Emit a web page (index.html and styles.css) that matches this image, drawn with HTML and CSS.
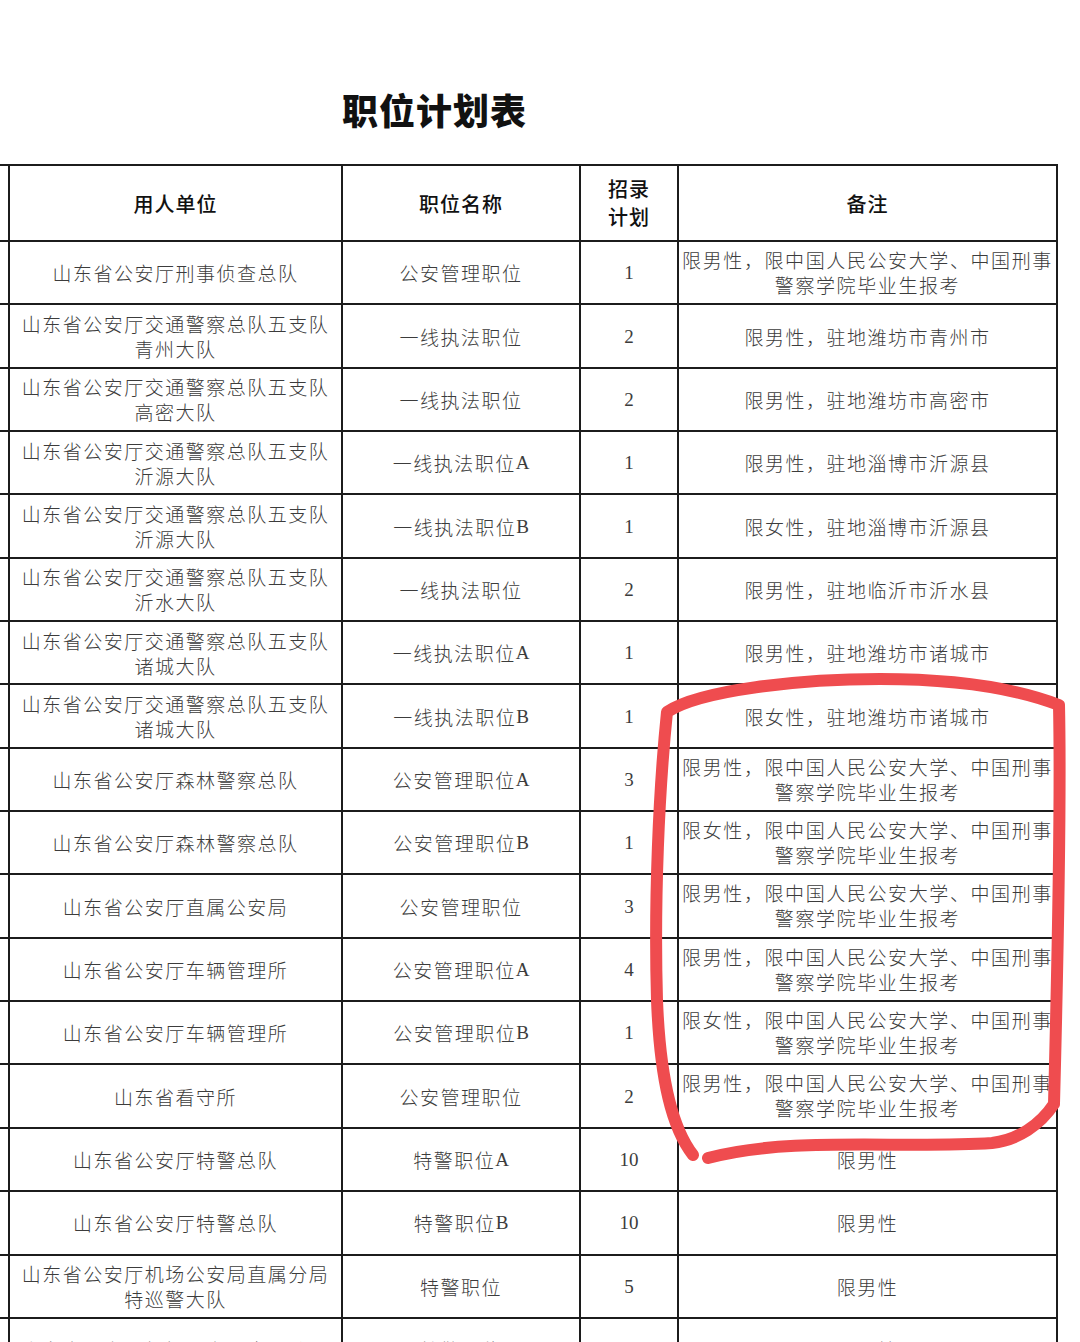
FILE: index.html
```html
<!DOCTYPE html>
<html lang="zh">
<head>
<meta charset="utf-8">
<title>职位计划表</title>
<link rel="stylesheet" href="styles.css">
</head>
<body>
<div class="page">
  <h1 class="title">职位计划表</h1>
  <div class="grid">
    <div class="c"></div><div class="c h">用人单位</div><div class="c h">职位名称</div><div class="c h h2">招录<br>计划</div><div class="c h">备注</div>

    <div class="c"></div><div class="c">山东省公安厅刑事侦查总队</div><div class="c">公安管理职位</div><div class="c n">1</div><div class="c r">限男性，限中国人民公安大学、中国刑事<br>警察学院毕业生报考</div>
    <div class="c"></div><div class="c">山东省公安厅交通警察总队五支队<br>青州大队</div><div class="c">一线执法职位</div><div class="c n">2</div><div class="c">限男性，驻地潍坊市青州市</div>
    <div class="c"></div><div class="c">山东省公安厅交通警察总队五支队<br>高密大队</div><div class="c">一线执法职位</div><div class="c n">2</div><div class="c">限男性，驻地潍坊市高密市</div>
    <div class="c"></div><div class="c">山东省公安厅交通警察总队五支队<br>沂源大队</div><div class="c">一线执法职位<span class="l">A</span></div><div class="c n">1</div><div class="c">限男性，驻地淄博市沂源县</div>
    <div class="c"></div><div class="c">山东省公安厅交通警察总队五支队<br>沂源大队</div><div class="c">一线执法职位<span class="l">B</span></div><div class="c n">1</div><div class="c">限女性，驻地淄博市沂源县</div>
    <div class="c"></div><div class="c">山东省公安厅交通警察总队五支队<br>沂水大队</div><div class="c">一线执法职位</div><div class="c n">2</div><div class="c">限男性，驻地临沂市沂水县</div>
    <div class="c"></div><div class="c">山东省公安厅交通警察总队五支队<br>诸城大队</div><div class="c">一线执法职位<span class="l">A</span></div><div class="c n">1</div><div class="c">限男性，驻地潍坊市诸城市</div>
    <div class="c"></div><div class="c">山东省公安厅交通警察总队五支队<br>诸城大队</div><div class="c">一线执法职位<span class="l">B</span></div><div class="c n">1</div><div class="c">限女性，驻地潍坊市诸城市</div>
    <div class="c"></div><div class="c">山东省公安厅森林警察总队</div><div class="c">公安管理职位<span class="l">A</span></div><div class="c n">3</div><div class="c r">限男性，限中国人民公安大学、中国刑事<br>警察学院毕业生报考</div>
    <div class="c"></div><div class="c">山东省公安厅森林警察总队</div><div class="c">公安管理职位<span class="l">B</span></div><div class="c n">1</div><div class="c r">限女性，限中国人民公安大学、中国刑事<br>警察学院毕业生报考</div>
    <div class="c"></div><div class="c">山东省公安厅直属公安局</div><div class="c">公安管理职位</div><div class="c n">3</div><div class="c r">限男性，限中国人民公安大学、中国刑事<br>警察学院毕业生报考</div>
    <div class="c"></div><div class="c">山东省公安厅车辆管理所</div><div class="c">公安管理职位<span class="l">A</span></div><div class="c n">4</div><div class="c r">限男性，限中国人民公安大学、中国刑事<br>警察学院毕业生报考</div>
    <div class="c"></div><div class="c">山东省公安厅车辆管理所</div><div class="c">公安管理职位<span class="l">B</span></div><div class="c n">1</div><div class="c r">限女性，限中国人民公安大学、中国刑事<br>警察学院毕业生报考</div>
    <div class="c"></div><div class="c">山东省看守所</div><div class="c">公安管理职位</div><div class="c n">2</div><div class="c r">限男性，限中国人民公安大学、中国刑事<br>警察学院毕业生报考</div>
    <div class="c"></div><div class="c">山东省公安厅特警总队</div><div class="c">特警职位<span class="l">A</span></div><div class="c n">10</div><div class="c">限男性</div>
    <div class="c"></div><div class="c">山东省公安厅特警总队</div><div class="c">特警职位<span class="l">B</span></div><div class="c n">10</div><div class="c">限男性</div>
    <div class="c"></div><div class="c">山东省公安厅机场公安局直属分局<br>特巡警大队</div><div class="c">特警职位</div><div class="c n">5</div><div class="c">限男性</div>
    <div class="c"></div><div class="c">山东省公安厅机场公安局直属分局</div><div class="c">特警职位</div><div class="c n">5</div><div class="c">限男性</div>
  </div>
  <svg class="mark" width="1080" height="1342" viewBox="0 0 1080 1342" aria-hidden="true">
    <path d="M693 1155 C672 1128 660 1080 657 1000 C654 900 659 790 667 712 C700 690 800 679 880 679 C960 679 1020 690 1059 705 C1061 800 1058 950 1054 1104 C1040 1125 1018 1140 992 1143 C900 1149 790 1136 708 1158" fill="none" stroke="#ef4c4f" stroke-width="12" stroke-linecap="round" stroke-linejoin="round"/>
  </svg>
</div>
</body>
</html>
```

FILE: styles.css
```css
html, body {
  margin: 0;
  padding: 0;
  background: #fff;
}
body {
  width: 1080px;
  height: 1342px;
  overflow: hidden;
  font-family: "Noto Sans CJK SC", "Noto Sans", sans-serif;
  color: #3c3c3c;
}
.page {
  position: relative;
  width: 1080px;
  height: 1342px;
  padding-top: 84px;
  box-sizing: border-box;
}
.title {
  margin: 0 0 0 342px;
  width: 186px;
  height: 80px;
  font-family: "Noto Sans CJK SC", serif;
  font-weight: 900;
  font-size: 36px;
  line-height: 50px;
  letter-spacing: 1px;
  color: #111;
}
.grid {
  margin-left: -2px;
  width: 1060px;
  box-sizing: border-box;
  display: grid;
  grid-template-columns: 8px 331px 236px 96px 377px;
  grid-template-rows: 74px;
  grid-auto-rows: 61.35px;
  gap: 2px;
  padding: 2px;
  background: #1c1c1c;
}
.c {
  background: #fff;
  display: flex;
  align-items: center;
  justify-content: center;
  text-align: center;
  font-size: 19px;
  font-weight: 300;
  line-height: 25px;
  letter-spacing: 1.5px;
  white-space: nowrap;
  overflow: visible;
}
.h {
  font-weight: 500;
  font-size: 20px;
  color: #111;
  letter-spacing: 1px;
}
.h2 {
  line-height: 28px;
}
.n {
  font-family: "Liberation Serif", serif;
  font-size: 19px;
  letter-spacing: 0;
}
.l {
  font-family: "Liberation Serif", serif;
  letter-spacing: 0;
}
.r {
  display: block;
  padding-top: 5px;
  letter-spacing: 1.6px;
  width: 377px;
  box-sizing: border-box;
}
.mark {
  position: absolute;
  left: 0;
  top: 0;
  pointer-events: none;
}
```
